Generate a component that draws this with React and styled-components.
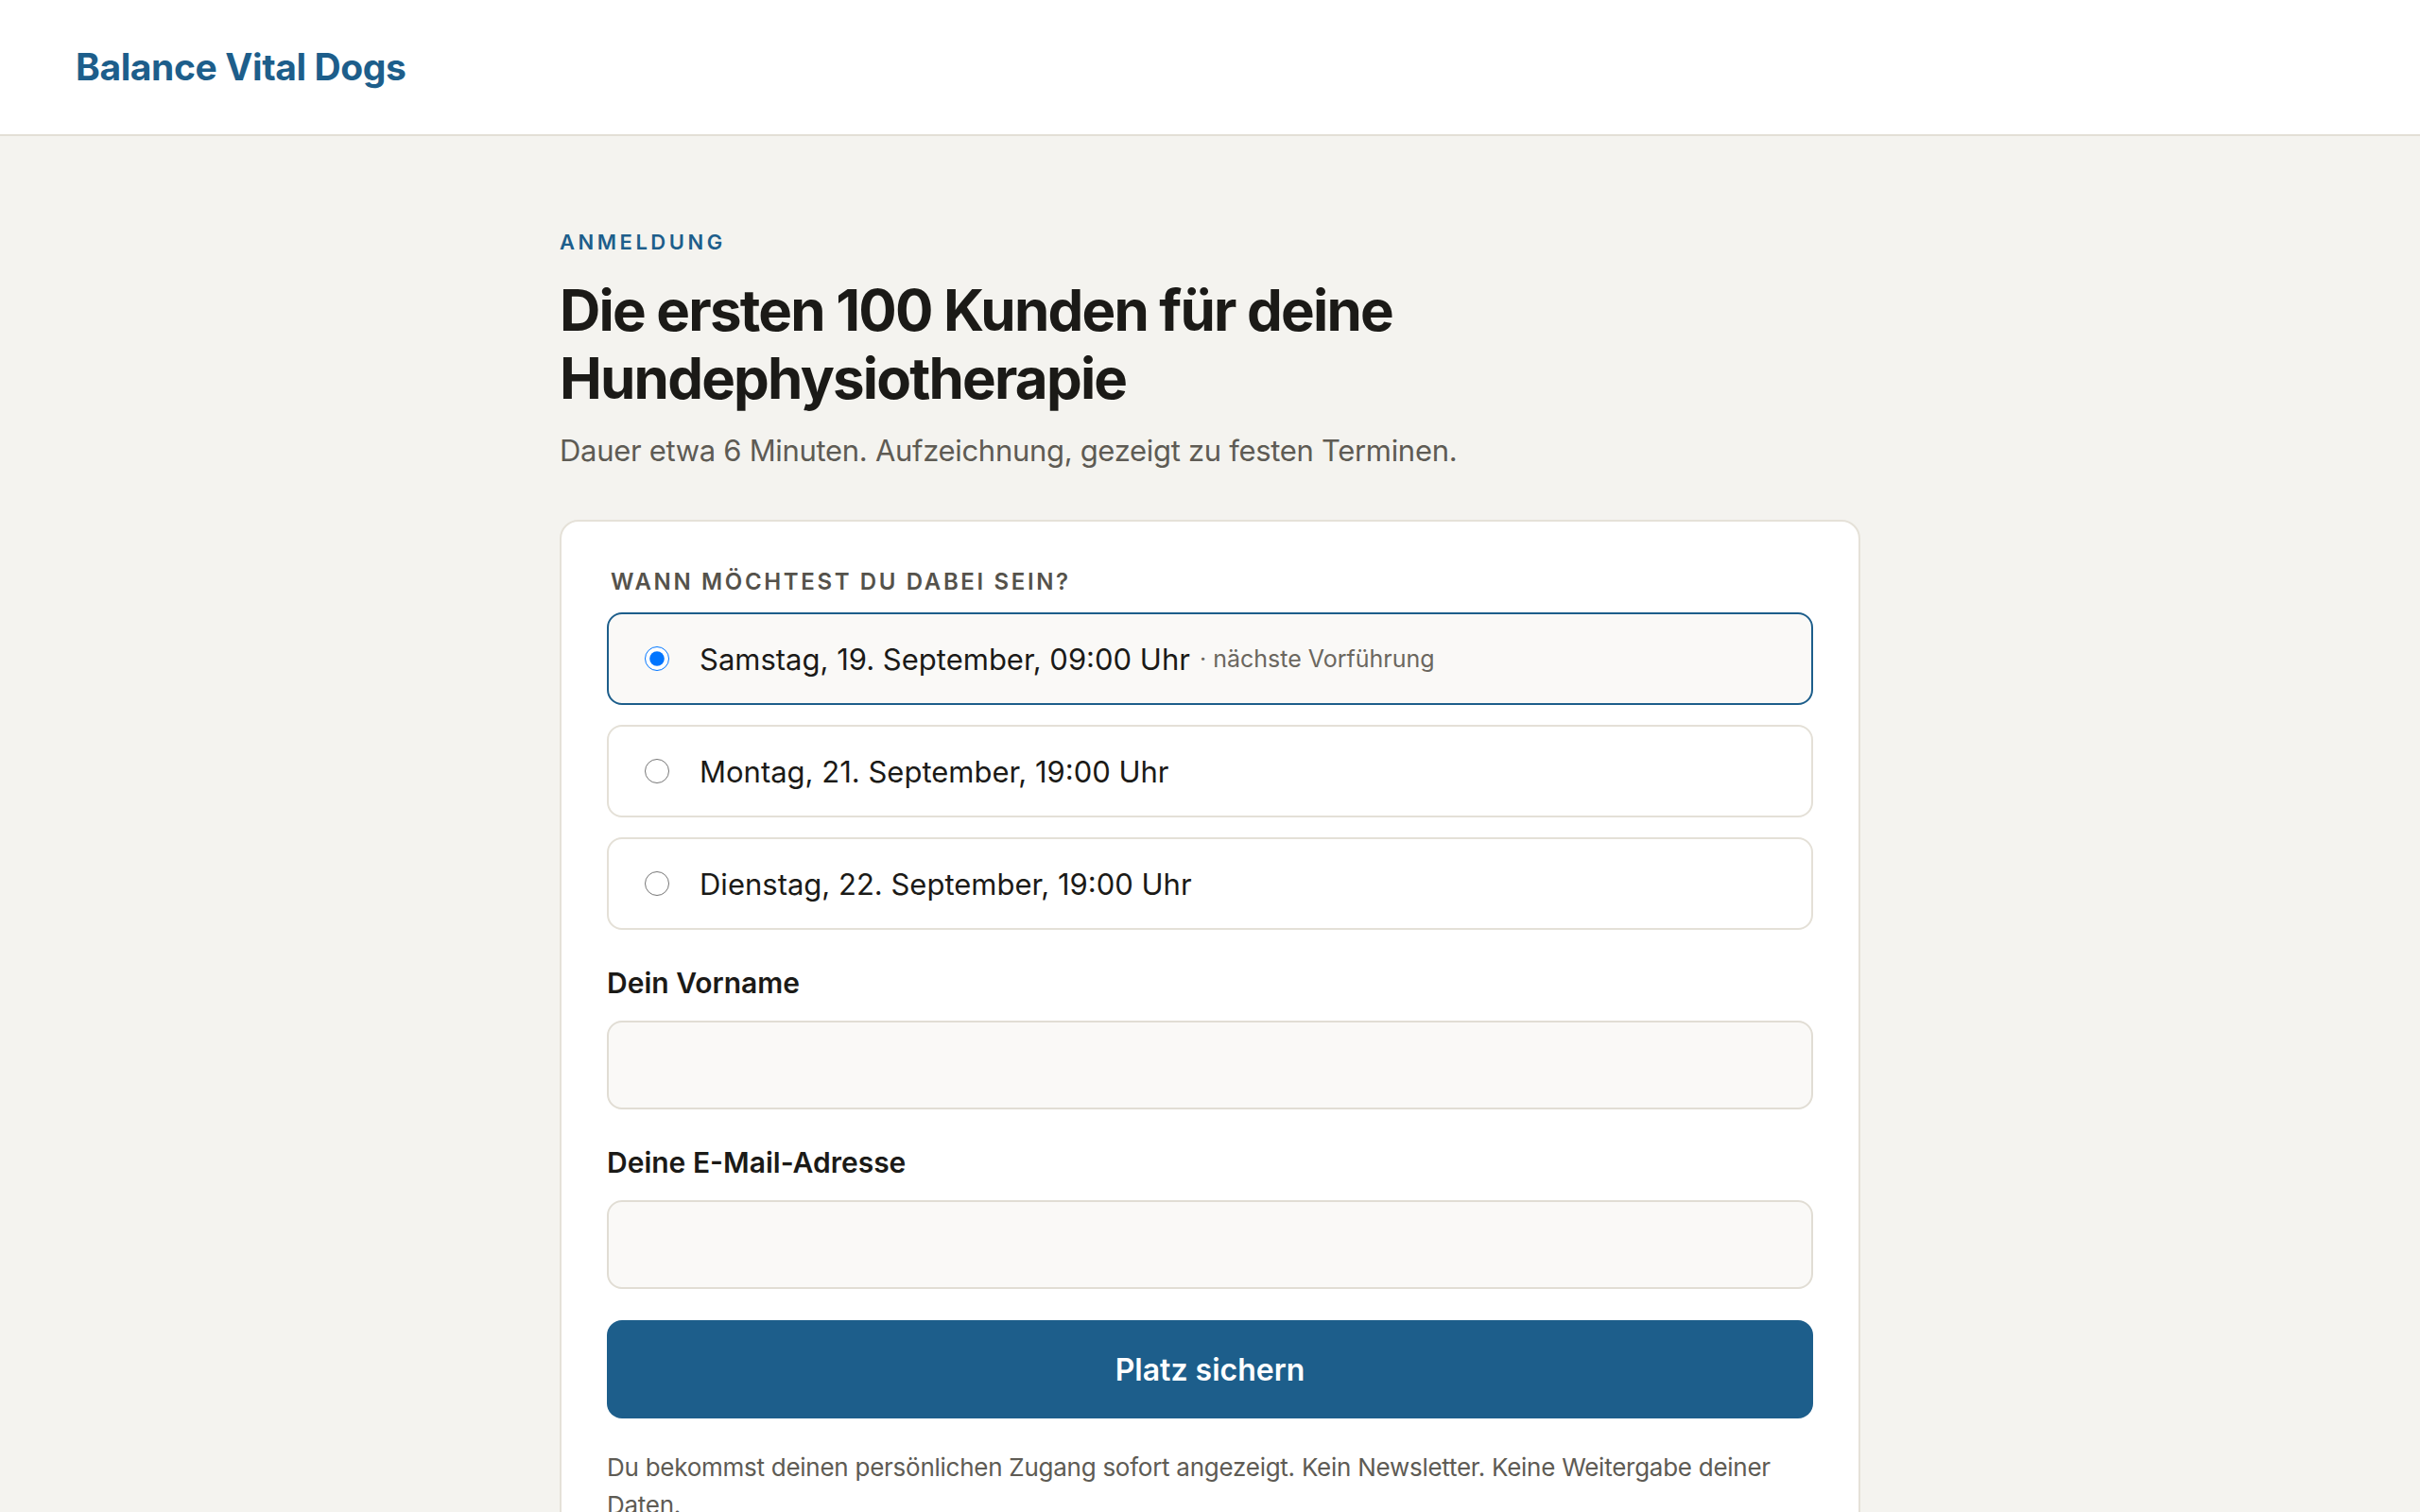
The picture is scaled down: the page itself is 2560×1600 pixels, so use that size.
import React, { useState } from 'react';
import styled, { createGlobalStyle } from 'styled-components';

const GlobalStyle = createGlobalStyle`
    * {
        box-sizing: border-box;
    }

    body {
        margin: 0;
        background: #f4f3ef;
        font-family: Inter, "Noto Sans", "Liberation Sans", sans-serif;
        color: #1b1a17;
    }
`

const slots = [
    { id: 'sa', label: 'Samstag, 19. September, 09:00 Uhr', note: '· nächste Vorführung' },
    { id: 'mo', label: 'Montag, 21. September, 19:00 Uhr' },
    { id: 'di', label: 'Dienstag, 22. September, 19:00 Uhr' },
];

function App() {
    const [slot, setSlot] = useState('sa');

    return (
        <>
            <GlobalStyle />
            <Header>
                <Logo>Balance Vital Dogs</Logo>
            </Header>
            <Main>
                <Eyebrow>Anmeldung</Eyebrow>
                <Title>Die ersten 100 Kunden für deine<br />Hundephysiotherapie</Title>
                <Lead>Dauer etwa 6 Minuten. Aufzeichnung, gezeigt zu festen Terminen.</Lead>

                <Card>
                    <SectionLabel>Wann möchtest du dabei sein?</SectionLabel>
                    <Options>
                        {slots.map((s) => (
                            <Option key={s.id} $active={slot === s.id}>
                                <Radio
                                    type="radio"
                                    name="slot"
                                    checked={slot === s.id}
                                    onChange={() => setSlot(s.id)}
                                />
                                <OptionText>{s.label}</OptionText>
                                {s.note && <Note>{s.note}</Note>}
                            </Option>
                        ))}
                    </Options>

                    <Field>
                        <FieldLabel htmlFor="vorname">Dein Vorname</FieldLabel>
                        <Input id="vorname" type="text" />
                    </Field>
                    <Field>
                        <FieldLabel htmlFor="email">Deine E-Mail-Adresse</FieldLabel>
                        <Input id="email" type="email" />
                    </Field>

                    <Submit type="button">Platz sichern</Submit>
                    <Fine>
                        Du bekommst deinen persönlichen Zugang sofort angezeigt. Kein Newsletter. Keine Weitergabe deiner Daten.
                    </Fine>
                </Card>
            </Main>
        </>
    )
}

export default App

const Header = styled.header`
    height: 144px;
    background: #fff;
    border-bottom: 2px solid #e3dfd6;
    display: flex;
    align-items: center;
    padding: 0 80px 2px;
`

const Logo = styled.div`
    font-size: 39px;
    font-weight: 700;
    color: #1d5e8b;
    letter-spacing: -0.01em;
`

const Main = styled.main`
    width: 1376px;
    margin: 0 auto;
    padding: 96px 0 80px;
`

const Eyebrow = styled.div`
    font-size: 22px;
    line-height: 32px;
    font-weight: 600;
    letter-spacing: 0.16em;
    text-transform: uppercase;
    color: #1d5e8b;
`

const Title = styled.h1`
    margin: 20px 0 0;
    font-size: 60px;
    line-height: 72px;
    font-weight: 700;
    letter-spacing: -0.03em;
    color: #1b1a17;
`

const Lead = styled.p`
    margin: 19px 0 0;
    font-size: 31px;
    line-height: 44px;
    letter-spacing: -0.01em;
    color: #5e5b54;
`

const Card = styled.section`
    margin-top: 51px;
    background: #fff;
    border: 2px solid #e5e1d8;
    border-radius: 20px;
    padding: 48px;
`

const SectionLabel = styled.div`
    padding-left: 4px;
    font-size: 24px;
    line-height: 32px;
    font-weight: 600;
    letter-spacing: 0.11em;
    text-transform: uppercase;
    color: #55524b;
`

const Options = styled.div`
    margin-top: 16px;
    display: flex;
    flex-direction: column;
    gap: 21px;
`

const Option = styled.label`
    height: 98px;
    display: flex;
    align-items: center;
    padding: 0 38px;
    border: 2px solid ${(p) => (p.$active ? '#1d5e8b' : '#e4e0d7')};
    border-radius: 16px;
    background: ${(p) => (p.$active ? '#faf9f7' : '#fff')};
    cursor: pointer;
`

const Radio = styled.input`
    width: 26px;
    height: 26px;
    margin: 0 32px 0 0;
    flex-shrink: 0;
`

const OptionText = styled.span`
    font-size: 31px;
    color: #1b1a17;
`

const Note = styled.span`
    margin-left: 10px;
    font-size: 25px;
    color: #6b675f;
`

const Field = styled.div`
    margin-top: 34px;
`

const FieldLabel = styled.label`
    display: block;
    font-size: 30px;
    line-height: 44px;
    font-weight: 600;
    color: #1b1a17;
`

const Input = styled.input`
    display: block;
    width: 100%;
    height: 94px;
    margin-top: 18px;
    padding: 0 28px;
    background: #faf9f7;
    border: 2px solid #e1ddd4;
    border-radius: 16px;
    font: inherit;
    font-size: 30px;

    &:focus {
        outline: none;
        border-color: #1d5e8b;
    }
`

const Submit = styled.button`
    display: block;
    width: 100%;
    height: 104px;
    margin-top: 33px;
    border: none;
    border-radius: 16px;
    background: #1d5e8b;
    color: #fff;
    font-family: inherit;
    font-size: 32px;
    font-weight: 600;
    cursor: pointer;
`

const Fine = styled.p`
    margin: 32px 0 0;
    font-size: 26px;
    line-height: 40px;
    letter-spacing: -0.01em;
    color: #5e5b54;
`
